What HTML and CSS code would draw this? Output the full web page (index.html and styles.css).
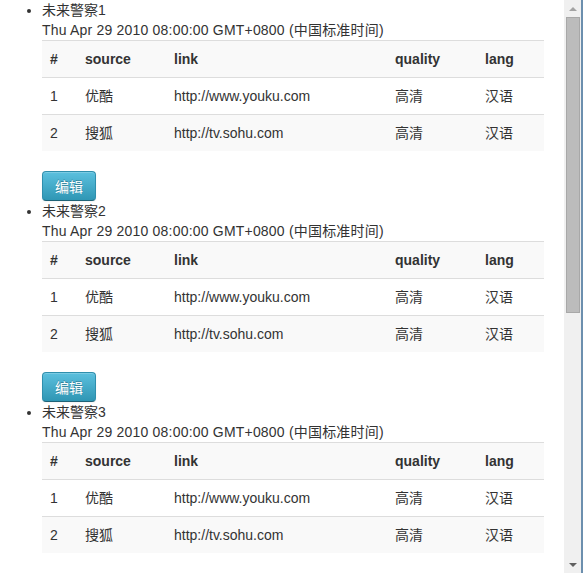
FILE: index.html
```html
<!DOCTYPE html>
<html>
<head>
<meta charset="utf-8">
<link rel="stylesheet" href="styles.css">
</head>
<body>
<div class="window">
  <div class="viewport">
    <ul class="movies">
      <li>
        <div class="title">未来警察1</div>
        <div class="date">Thu Apr 29 2010 08:00:00 GMT+0800 (中国标准时间)</div>
        <table class="table">
          <tbody>
            <tr><th class="c1">#</th><th class="c2">source</th><th class="c3">link</th><th class="c4">quality</th><th class="c5">lang</th></tr>
            <tr><td>1</td><td>优酷</td><td>http://www.youku.com</td><td>高清</td><td>汉语</td></tr>
            <tr><td>2</td><td>搜狐</td><td>http://tv.sohu.com</td><td>高清</td><td>汉语</td></tr>
          </tbody>
        </table>
        <button class="btn">编辑</button>
      </li>
      <li>
        <div class="title">未来警察2</div>
        <div class="date">Thu Apr 29 2010 08:00:00 GMT+0800 (中国标准时间)</div>
        <table class="table">
          <tbody>
            <tr><th class="c1">#</th><th class="c2">source</th><th class="c3">link</th><th class="c4">quality</th><th class="c5">lang</th></tr>
            <tr><td>1</td><td>优酷</td><td>http://www.youku.com</td><td>高清</td><td>汉语</td></tr>
            <tr><td>2</td><td>搜狐</td><td>http://tv.sohu.com</td><td>高清</td><td>汉语</td></tr>
          </tbody>
        </table>
        <button class="btn">编辑</button>
      </li>
      <li>
        <div class="title">未来警察3</div>
        <div class="date">Thu Apr 29 2010 08:00:00 GMT+0800 (中国标准时间)</div>
        <table class="table">
          <tbody>
            <tr><th class="c1">#</th><th class="c2">source</th><th class="c3">link</th><th class="c4">quality</th><th class="c5">lang</th></tr>
            <tr><td>1</td><td>优酷</td><td>http://www.youku.com</td><td>高清</td><td>汉语</td></tr>
            <tr><td>2</td><td>搜狐</td><td>http://tv.sohu.com</td><td>高清</td><td>汉语</td></tr>
          </tbody>
        </table>
      </li>
    </ul>
  </div>
  <div class="scrollbar">
    <div class="arrow up"></div>
    <div class="track">
      <div class="thumb"></div>
    </div>
    <div class="arrow down"></div>
  </div>
  <div class="frame"></div>
</div>
</body>
</html>
```

FILE: styles.css
```css
html, body {
  margin: 0;
  padding: 0;
  background: #fff;
}
body {
  font-family: "Liberation Sans", "Noto Sans CJK SC", sans-serif;
  font-size: 14px;
  line-height: 20px;
  color: #333;
}
.window {
  display: flex;
  width: 583px;
  height: 573px;
  overflow: hidden;
}
.viewport {
  width: 564px;
  height: 573px;
  overflow: hidden;
  flex: none;
}
.movies {
  margin: 0;
  padding: 0 20px 0 42px;
  list-style: disc;
}
.title, .date {
  height: 20px;
  white-space: nowrap;
}
.date {
  letter-spacing: 0.2px;
}
.table {
  width: 502px;
  border-collapse: collapse;
  border-spacing: 0;
  margin: 0 0 20px 0;
  table-layout: fixed;
}
.table th, .table td {
  padding: 8px;
  line-height: 20px;
  text-align: left;
  vertical-align: top;
  border-top: 1px solid #ddd;
  white-space: nowrap;
}
.table th {
  font-weight: bold;
}
.table tr:nth-child(odd) th,
.table tr:nth-child(odd) td {
  background: #f9f9f9;
}
.c1 { width: 19px; }
.c2 { width: 73px; }
.c3 { width: 205px; }
.c4 { width: 74px; }
.c5 { width: 51px; }
.btn {
  display: block;
  box-sizing: border-box;
  width: 54px;
  height: 30px;
  margin: 0;
  padding: 4px 12px;
  font-family: "Noto Sans CJK SC", sans-serif;
  font-size: 14px;
  line-height: 20px;
  color: #fff;
  text-shadow: 0 -1px 0 rgba(0,0,0,0.25);
  background: linear-gradient(to bottom, #5bc0de, #2f96b4);
  border: 1px solid #2f8fad;
  border-bottom-color: #1f6377;
  border-radius: 4px;
  box-shadow: inset 0 1px 0 rgba(255,255,255,0.2), 0 1px 2px rgba(0,0,0,0.05);
}
.scrollbar {
  width: 17px;
  height: 573px;
  flex: none;
  background: #f0f0f0;
  display: flex;
  flex-direction: column;
}
.arrow {
  height: 17px;
  flex: none;
  display: flex;
  align-items: center;
  justify-content: center;
}
.arrow::before {
  content: "";
  width: 0;
  height: 0;
  border-left: 4px solid transparent;
  border-right: 4px solid transparent;
}
.arrow.up::before {
  border-bottom: 4px solid #a3a3a3;
}
.arrow.down::before {
  border-top: 4px solid #606060;
}
.track {
  flex: 1;
  padding: 0 1px 0 2px;
}
.thumb {
  height: 296px;
  background: #bcbcbc;
  border: 1px solid #a8a8a8;
  box-sizing: border-box;
}
.frame {
  width: 2px;
  height: 573px;
  flex: none;
  background: #6c8fae;
}
```
